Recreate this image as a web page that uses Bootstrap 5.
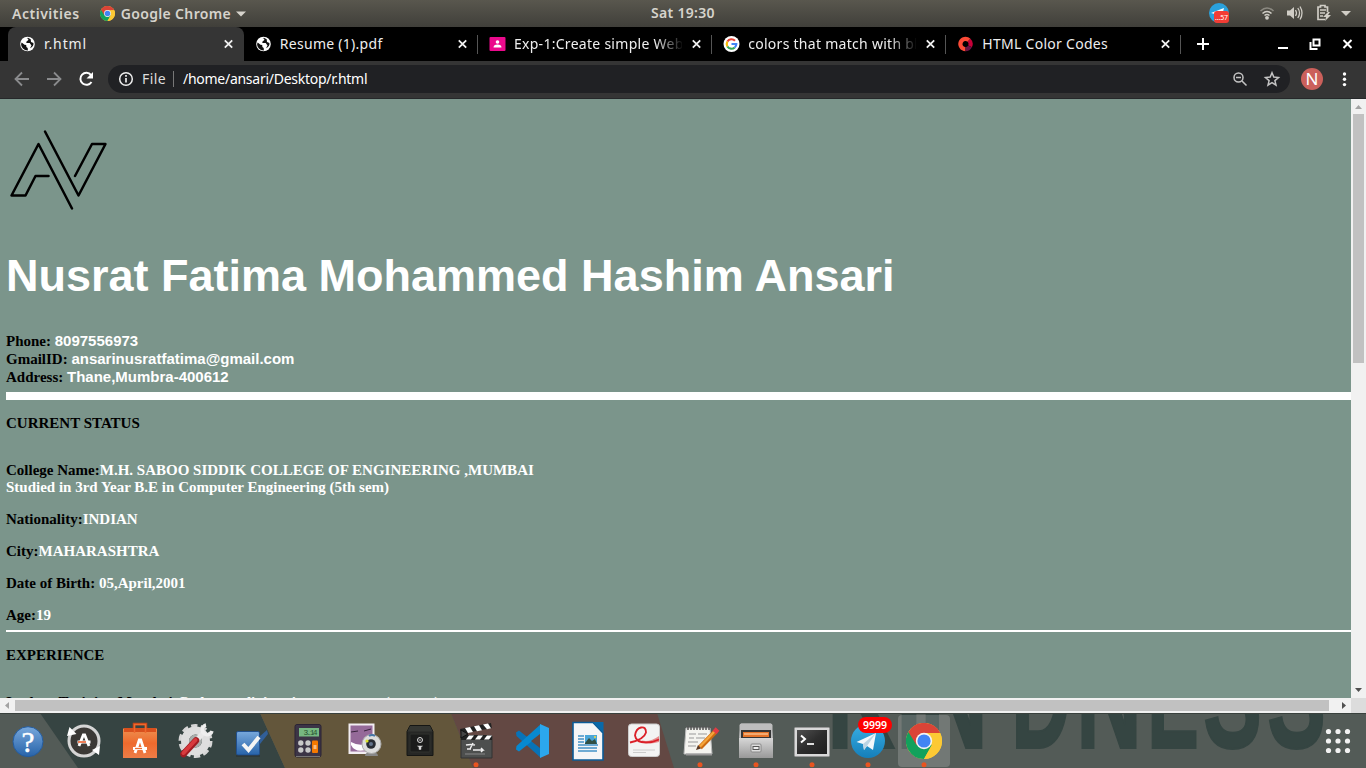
<!DOCTYPE html>
<html lang="en">
<head>
<meta charset="utf-8">
<title>r.html</title>
<link href="https://cdn.jsdelivr.net/npm/bootstrap@5.3.0/dist/css/bootstrap.min.css" rel="stylesheet">
<script src="https://cdn.jsdelivr.net/npm/bootstrap@5.3.0/dist/js/bootstrap.bundle.min.js"></script>
<style>
body{width:1366px;height:768px;overflow:hidden;background:#000;font-family:"Noto Sans",sans-serif;font-size:14px;color:#eee}
svg{display:block;flex:none}
.topbar{height:27px;background:linear-gradient(#59574e,#403f3a);color:#d6d3cc;font-weight:600;font-size:14px;line-height:27px}
.cell{flex:1 1 0}
.activities{margin-left:12px;letter-spacing:.52px}
.app-name{letter-spacing:.35px}
.clock{letter-spacing:.3px;line-height:25px;height:27px}
.tabs{height:34px;background:#000;padding-left:8px}
.tab-item{width:234.2px;height:34px;padding:0 10px 0 11px;position:relative;line-height:34px}
.tab-item.on{background:#353535;border-radius:8px 8px 0 0;width:235.8px}
.tab-item:not(.on)::after{content:"";position:absolute;right:0;top:8px;width:1px;height:19px;background:#555}
.tab-title{width:168px;overflow:hidden;white-space:nowrap;margin-left:8px;letter-spacing:.28px}
.fade-end{-webkit-mask-image:linear-gradient(90deg,#000 84%,transparent 101%)}
.toolbar{height:38px;background:#353535;border-bottom:1px solid #26282a}
.omni{width:1182px;height:28px;border-radius:14px;background:#202124;line-height:26px}
.avatar{width:22px;height:22px;border-radius:50%;background:#cb605b;font-size:17px;line-height:22px;color:#fff}
.view{height:599px}
.page{width:1351px;height:599px;overflow:hidden;background:#7b958b;padding:24px 0 0 6px;color:#000;font:bold 15px/18px "Liberation Serif",serif}
.page h1{font:bold 45px/52px "Liberation Sans",sans-serif;color:#fff;margin:32px 0 30px;white-space:nowrap}
.page p{margin:0 0 15px;line-height:17px;white-space:nowrap}
.page b{color:#fff}
.sans{font-family:"Liberation Sans",sans-serif}
.rule{background:#fff}
.vbar{width:15px;background:#f1f1f1}
.hbar{height:15px;background:#f1f1f1}
.thumb{background:#c1c1c1}
.dock{height:55px;position:relative;overflow:hidden;background:#535b57}
.wall{position:absolute;left:0;top:0}
.launchers{position:relative}
.count{position:absolute;left:858px;top:4px;width:34px;height:16px;border-radius:8px;background:#f00;font-weight:600;font-size:10.5px;line-height:16px;color:#fff}
</style>
</head>
<body>
<svg width="0" height="0" class="position-absolute">
<defs>
<symbol id="x" viewBox="0 0 10 10"><path d="M1.3 1.3l7.4 7.4M8.7 1.3L1.3 8.7" stroke="#f1f1f1" stroke-width="1.8"/></symbol>
<symbol id="globe" viewBox="0 0 16 16"><circle cx="8" cy="8" r="7.3" fill="#fff"/><path d="M2.2 6.5L5 8.7l1.7.3.2 2 1.3 1 .2 2.4C4.500 14.500 1.600 11.500 1.600 8zM6.500 2.500c1.500-.6 2.500.2 2.300 1.500L7 5.500 6.800 7l3.400.1L12 9.500l-1.500 2.700c2.600-1 3.900-3.200 3.400-5.200L11.500 6l-.3-2.800L8.500 1.800z" fill="#111"/></symbol>
<symbol id="chrome" viewBox="-18 -18 36 36"><circle r="18" fill="#fcc934"/><path d="M0 0L-15.600-9A18 18 0 0 0 0 18L8 4z" fill="#12a15c"/><path d="M-15.600-9A18 18 0 0 1 16.200-8H0L-7.500 4z" fill="#db4437"/><path d="M16.200-8A18 18 0 0 1 0 18L7.800 4 7-8z" fill="#fcc934"/><circle r="8.200" fill="#f4f4f4"/><circle r="6.600" fill="#4285f4"/></symbol>
<linearGradient id="blue" x2="0" y2="1"><stop stop-color="#78a8dc"/><stop offset="1" stop-color="#2763a9"/></linearGradient>
<linearGradient id="silver" x2="0" y2="1"><stop stop-color="#d7d7d7"/><stop offset="1" stop-color="#999"/></linearGradient>
<linearGradient id="orange" x2="0" y2="1"><stop stop-color="#ed9050"/><stop offset=".5" stop-color="#ee6a2d"/><stop offset="1" stop-color="#ed7d47"/></linearGradient>
<linearGradient id="tg" x2="0" y2="1"><stop stop-color="#38aee3"/><stop offset="1" stop-color="#157fba"/></linearGradient>
<linearGradient id="dark" x2="1" y2="1"><stop stop-color="#505050"/><stop offset=".5" stop-color="#2d2d2d"/><stop offset="1" stop-color="#1f1f1f"/></linearGradient>
</defs>
</svg>

<div class="topbar d-flex align-items-center">
  <div class="cell d-flex align-items-center">
    <span class="activities">Activities</span>
    <svg width="15" height="15" style="margin:0 6px 0 20px"><use href="#chrome"/></svg>
    <span class="app-name">Google Chrome</span>
    <svg width="10" height="6" style="margin-left:5px"><path d="M0 .5h10l-5 5z" fill="#d6d3cc"/></svg>
  </div>
  <div class="clock">Sat 19:30</div>
  <div class="cell d-flex align-items-center justify-content-end">
    <svg width="160" height="27">
      <circle cx="13" cy="13" r="10" fill="#2aa1dc"/><path d="M5 13l13-5-2 8z" fill="#fff"/><rect x="8" y="11" width="15" height="12" rx="3" fill="#f23c34"/><text x="9" y="20" font-size="7" textLength="13" font-weight="400" fill="#fff">...57</text>
      <g fill="none" stroke="#d0cdc6" stroke-width="1.600"><path d="M54.500 11q6.500-6 13 0" stroke="#8b8981"/><path d="M56.500 13.500q4.500-4 9 0M58.500 15.500q2.500-2 5 0"/></g><circle cx="61" cy="17.800" r="1.900" fill="#d0cdc6"/>
      <path d="M81 10.500h3l4-3.500v12l-4-3.500h-3z" fill="#d0cdc6"/><path d="M89.500 10q2 3 0 6M91.800 8q3.500 5 0 10M94 6.500q4 6.500 0 13" fill="none" stroke="#d0cdc6" stroke-width="1.300"/>
      <path d="M119 19.500h-7V7h2.500V5.500h4.500V7h2.500v5M114 10h6M114 13h5M114 16h3" stroke="#d0cdc6" stroke-width="1.700" fill="none"/><path d="M122 12l-5 5h3l-1 4 6-6h-3l2-3z" fill="#d0cdc6"/>
      <path d="M135 11h10l-5 5z" fill="#d0cdc6"/>
    </svg>
  </div>
</div>

<div class="tabs d-flex">
  <div class="tab-item on d-flex align-items-center"><svg width="17" height="16"><use href="#globe"/></svg><span class="tab-title" style="letter-spacing:.9px">r.html</span><svg class="ms-auto" width="11" height="10"><use href="#x"/></svg></div>
  <div class="tab-item d-flex align-items-center"><svg width="17" height="16"><use href="#globe"/></svg><span class="tab-title">Resume (1).pdf</span><svg class="ms-auto" width="11" height="10"><use href="#x"/></svg></div>
  <div class="tab-item d-flex align-items-center"><svg width="17" height="16" viewBox="0 0 17 16"><rect x=".5" y="1" width="16" height="14" rx="1" fill="#eb0a8c"/><circle cx="8.500" cy="6" r="1.800" fill="#fff"/><path d="M4.500 11.500q0-3 4-3t4 3z" fill="#fff"/></svg><span class="tab-title fade-end">Exp-1:Create simple Web Page</span><svg class="ms-auto" width="11" height="10"><use href="#x"/></svg></div>
  <div class="tab-item d-flex align-items-center"><svg width="17" height="16" viewBox="0 0 17 16"><circle cx="8.500" cy="8" r="8" fill="#fff"/><g fill="none" stroke-width="2.200"><path d="M4.400 5.500A4.800 4.800 0 0 1 12 4.800" stroke="#ea4335"/><path d="M4.400 10.500a5 5 0 0 1 0-5" stroke="#fbbc05"/><path d="M11.700 11.500A4.800 4.800 0 0 1 4.400 10.500" stroke="#34a853"/><path d="M8.500 8h4.800q0 2.200-1.600 3.500" stroke="#4285f4"/></g></svg><span class="tab-title fade-end">colors that match with black</span><svg class="ms-auto" width="11" height="10"><use href="#x"/></svg></div>
  <div class="tab-item d-flex align-items-center"><svg width="17" height="16" viewBox="0 0 17 16"><g fill="none" stroke-width="4.200"><path d="M8.500 13.100A5.100 5.100 0 1 1 12 4.300" stroke="#fc4a36"/><path d="M12 4.300a5.100 5.100 0 0 1 1 6" stroke="#c70039"/><path d="M13 10.300a5 5 0 0 1-4.500 2.800" stroke="#6b1244"/></g></svg><span class="tab-title">HTML Color Codes</span><svg class="ms-auto" width="11" height="10"><use href="#x"/></svg></div>
  <svg width="184" height="34"><g stroke="#fff" stroke-width="2" fill="none"><path d="M16 17h12M22 11v12M97 21h10"/><path d="M132.500 12.500h6v6h-6zM129.500 15v7h7"/><path d="M162.500 13l8 8m0-8l-8 8"/></g></svg>
</div>

<div class="toolbar d-flex align-items-center">
  <svg width="108" height="37"><g fill="none" stroke="#8a8b8d" stroke-width="1.800"><path d="M29 18H16M22 11.500L15.500 18l6.500 6.500M47 18h13M54 11.500l6.500 6.500-6.500 6.500"/><path d="M91.500 21a6 6 0 1 1-.5-7" stroke="#fff" stroke-width="2"/></g><path d="M93 11v6.500h-6.500z" fill="#fff"/></svg>
  <div class="omni d-flex align-items-center" style="margin-bottom:1px">
    <svg width="34" height="28"><circle cx="18" cy="14" r="6.300" fill="none" stroke="#eee" stroke-width="1.500"/><path d="M18 13v4.500M18 10v1.700" stroke="#eee" stroke-width="1.700"/></svg>
    <span style="color:#ddd;letter-spacing:.4px">File</span>
    <span style="width:1px;height:16px;background:#777;margin:0 9px 0 7px"></span>
    <span class="text-white" style="letter-spacing:-.27px">/home/ansari/Desktop/r.html</span>
    <svg class="ms-auto" width="66" height="28"><g fill="none" stroke="#c4c4c4" stroke-width="1.500"><circle cx="14.500" cy="12.500" r="4.500"/><path d="M18 16l4.500 4.500M12 12.500h5"/><path d="M48 7.800l1.800 4.300 4.700.4-3.600 3.100 1.100 4.600-4-2.500-4 2.500 1.100-4.600-3.600-3.100 4.700-.4z"/></g></svg>
  </div>
  <div class="avatar text-center" style="margin:0 0 1px 11px">N</div>
  <svg width="42" height="37"><g fill="#fff"><circle cx="21.500" cy="13" r="1.700"/><circle cx="21.500" cy="18.300" r="1.700"/><circle cx="21.500" cy="23.600" r="1.700"/></g></svg>
</div>

<div class="view d-flex">
  <main class="page">
    <svg width="104" height="95"><g transform="translate(-6,-123)" fill="none" stroke="#000" stroke-width="2.500" stroke-linecap="round" stroke-linejoin="round"><path d="M72 208.500L38.500 144l-27 51.500H25.500L35.500 176H48.500M45 131.500L78.500 195.500 105.500 144H92L75 176"/></g></svg>
    <h1>Nusrat Fatima Mohammed Hashim Ansari</h1>
    <div>Phone: <b class="sans">8097556973</b></div>
    <div>GmailID: <b class="sans">ansarinusratfatima@gmail.com</b></div>
    <div>Address: <b class="sans">Thane,Mumbra-400612</b></div>
    <div class="rule" style="height:8px;margin:6px 0 15px"></div>
    <p style="margin-bottom:30px">CURRENT STATUS</p>
    <p>College Name:<b>M.H. SABOO SIDDIK COLLEGE OF ENGINEERING ,MUMBAI<br>Studied in 3rd Year B.E in Computer Engineering (5th sem)</b></p>
    <p>Nationality:<b>INDIAN</b></p>
    <p>City:<b>MAHARASHTRA</b></p>
    <p>Date of Birth: <b>05,April,2001</b></p>
    <p class="mb-0">Age:<b>19</b></p>
    <div class="rule" style="height:2px;margin:6px 0 15px"></div>
    <p style="margin-bottom:30px">EXPERIENCE</p>
    <p>In-door Training,Mumbai:<b>Codersmedia’s private company(remote)</b></p>
  </main>
  <div class="vbar d-flex flex-column align-items-center">
    <svg width="15" height="15"><path d="M4 10h7L7.500 6z" fill="#a3a3a3"/></svg>
    <div class="thumb" style="width:11px;height:249px"></div>
    <svg class="mt-auto" width="15" height="15"><path d="M4 5h7L7.500 9z" fill="#505050"/></svg>
  </div>
</div>
<div class="hbar d-flex align-items-center">
  <svg width="15" height="15"><path d="M9 4v7L5 7.500z" fill="#a3a3a3"/></svg>
  <div class="thumb" style="width:1314px;height:11px"></div>
  <svg width="22" height="15"><path d="M13 4v7l4-3.500z" fill="#505050"/></svg>
  <div class="ms-auto h-100" style="width:15px;background:#dcdcdc"></div>
</div>

<div class="dock d-flex align-items-center">
  <svg class="wall" width="1366" height="55">
    <path d="M40 0h220l25 55H78z" fill="#364442"/><path d="M260 0h191l22 55H285z" fill="#63563b"/><path d="M451 0h206l17 55H473z" fill="#634843"/>
    <g fill="#354542" stroke="#354542" stroke-width="2" font-family="Liberation Sans" font-weight="700" font-size="150" aria-hidden="true">
      <text x="827" y="35" textLength="68" lengthAdjust="spacingAndGlyphs">K</text><text x="896" y="35" textLength="26" lengthAdjust="spacingAndGlyphs">I</text><text x="920" y="35" textLength="68" lengthAdjust="spacingAndGlyphs">N</text><text x="1011" y="35" textLength="60" lengthAdjust="spacingAndGlyphs">D</text><text x="1076" y="35" textLength="66" lengthAdjust="spacingAndGlyphs">N</text><text x="1147" y="35" textLength="52" lengthAdjust="spacingAndGlyphs">E</text><text x="1203" y="35" textLength="59" lengthAdjust="spacingAndGlyphs">S</text><text x="1267" y="35" textLength="59" lengthAdjust="spacingAndGlyphs">S</text>
    </g>
    <path d="M0 .5h1366" stroke="#39413d"/>
  </svg>
  <div class="launchers d-flex">
    <svg width="56" height="55"><circle cx="28" cy="28.700" r="15" fill="url(#blue)" stroke="#245c9f"/><text x="28" y="38.500" text-anchor="middle" font-family="Liberation Serif" font-size="29" fill="#fff" stroke="#fff" stroke-width=".5">?</text></svg>
    <svg width="56" height="55"><circle cx="28" cy="28" r="15" fill="#3b3936" stroke="#d5d5d5" stroke-width="3"/><path d="M11 23l2.500-9 7 7zM44 33l-1 9-7-5z" fill="#fff"/><path d="M23 33l4.300-11h1.400L33 33" stroke="#fff" stroke-width="2.800" fill="none"/><path d="M21.500 29h13" stroke="#fff" stroke-width="3"/><path d="M22 29h8" stroke="#e95420" stroke-width="1.500"/></svg>
    <svg width="56" height="55"><path d="M22 20v-9h12v9" fill="none" stroke="#c54417" stroke-width="2.500"/><path d="M11 15.500h34V45H11z" fill="url(#orange)"/><path d="M12 15h32v4H12z" fill="#d9501d"/><path d="M22.500 20v-8.500h11V20" fill="none" stroke="#f0682d" stroke-width="1.500"/><path d="M23 40l4.300-13h1.400L33 40" stroke="#fff" stroke-width="2.800" fill="none"/><path d="M21 35.500h14" stroke="#fff" stroke-width="3"/><path d="M23 35.500h7" stroke="#ed6f33" stroke-width="1.300"/></svg>
    <svg width="56" height="55"><circle cx="27.500" cy="28" r="14.500" fill="none" stroke="#d6d6d6" stroke-width="5" stroke-dasharray="6 3.110"/><circle cx="27.500" cy="28" r="10.500" fill="none" stroke="#dedede" stroke-width="8"/><circle cx="27.500" cy="28" r="6.500" fill="#a9adab"/><path d="M28 28l9-10" stroke="#e8e8e8" stroke-width="5"/><path d="M44 18a5 5 0 1 1-6-6" fill="none" stroke="#eee" stroke-width="3.400"/><path d="M15.500 41L28 27.500" stroke="#a01c22" stroke-width="6.500" stroke-linecap="round"/><path d="M15.500 40L27.500 27" stroke="#d83a3e" stroke-width="4" stroke-linecap="round"/></svg>
    <svg width="56" height="55"><path d="M35 24l8-7 1 4-8 10z" fill="#315f98"/><rect x="12.500" y="18.500" width="23" height="23.500" rx="1.500" fill="url(#blue)" stroke="#214f8c"/><path d="M19 31l5.500 6L35 24" fill="none" stroke="#f4f4f4" stroke-width="4"/><path d="M12 43h24" stroke="#222" opacity=".6"/></svg>
    <svg width="56" height="55"><rect x="15" y="11.500" width="26" height="32.500" rx="2" fill="#3c3546" stroke="#2a2334"/><rect x="19" y="15" width="20" height="8.500" fill="#77b881"/><text x="23.500" y="22" font-family="Liberation Mono" font-size="8" textLength="14" fill="#26532f">3.14</text><g fill="#c9c9c9"><circle cx="20.800" cy="30" r="2.700"/><circle cx="28" cy="30" r="2.700"/><circle cx="20.800" cy="37" r="2.700"/><circle cx="28" cy="37" r="2.700"/></g><rect x="32" y="27.500" width="6" height="12.500" rx="1" fill="#f57900"/><path d="M33.500 33h3m-3 2h3" stroke="#fff"/><path d="M16 43.500h24" stroke="#777"/></svg>
    <svg width="56" height="55"><rect x="12.500" y="10.500" width="26" height="30.500" fill="#f2edf2"/><rect x="14.500" y="12.500" width="22" height="26" fill="#956a99"/><path d="M15 19l7-1M28 18l7-2" stroke="#38233d"/><path d="M15 29q7 4 15 2v6q-11 3-15-5z" fill="#fff"/><path d="M29 43q0-4 6.500-4t6.500 4z" fill="#888"/><circle cx="35.500" cy="31" r="9.500" fill="#ddd" stroke="#aaa"/><circle cx="35" cy="31" r="4.800" fill="#282c34"/><circle cx="35" cy="31" r="2" fill="#63738b"/><circle cx="31" cy="28" r="1.600" fill="#dce329"/><path d="M33 23q3-2 6 0" stroke="#4675a7" stroke-width="2" fill="none"/></svg>
    <svg width="56" height="55"><path d="M18 12.500h20l3 6v24H15v-24z" fill="#262725" stroke="#151614"/><path d="M18 13h20l2.500 5.500h-25z" fill="#343632"/><rect x="18" y="21" width="20" height="18" rx="1" fill="#1b1c1b" stroke="#30322f"/><circle cx="28" cy="27" r="2.500" fill="#1b1c1b" stroke="#ddd"/><path d="M26.500 26l3 2m0-2l-3 2M25.500 33h5l-1.500 1v2.500h-2V34z" stroke="#ccc" stroke-width=".5" fill="#ddd"/></svg>
    <svg width="56" height="55"><path d="M13 23h31v22H13z" fill="#4d4f4e" stroke="#333"/><path d="M12 16l31-6 .8 5L13 21z" fill="#222"/><path d="M17 15l5-1 3 5-5 1zM26 13.300l5-1 3 5-5 1zM35 11.500l5-1 3 4.700-4 1z" fill="#fff"/><path d="M13 22h31v5H13z" fill="#222"/><path d="M21 22.500h5l-3 4h-5zM30 22.500h5l-3 4h-5zM39 22.500h5l-3 4h-5z" fill="#fff"/><path d="M13 17v8l7-4z" fill="#444" stroke="#111"/><path d="M18 32q5-1 9 0M19 36h4m2-6l-3 6M25 37h10l-2-2m2 2l-2 2" stroke="#eee" stroke-width="1.500" fill="none"/><path d="M17 41h20" stroke="#888"/><circle cx="28" cy="51.700" r="2.500" fill="#e95420"/></svg>
    <svg width="56" height="55"><path d="M12 19.500l3-2 22 17.500V45L12.500 23z" fill="#0873b8"/><path d="M12 36.500l3 2L37 21V11L12.500 33z" fill="#0789d1"/><path d="M36 11l9 4v26l-9 4z" fill="#2ba7ed"/><path d="M36 21v14l-9-7z" fill="#634843"/></svg>
    <svg width="56" height="55"><path d="M13 9.500h20L43 20v27H13z" fill="#f5f6f7" stroke="#0b5c98" stroke-width="1.600"/><path d="M33 9h10.500v11z" fill="#0869a9"/><g stroke="#4393c8" stroke-width="1.500"><path d="M18 23h6m-6 3h6m-6 3h6m-6 3h20M18 35h19M18 38h19"/></g><rect x="25" y="22" width="12" height="9" fill="#4aa6d8"/><path d="M25 30l4-5 3 3 3-2 2 5H25z" fill="#315044"/><circle cx="35" cy="24" r="1" fill="#f8dd35"/></svg>
    <svg width="56" height="55"><rect x="12.500" y="11" width="31" height="32.500" rx="3" fill="#f3f3f3" stroke="#ccc"/><path d="M26 27.500q8 2 17-4.500v6q-10 3-17-.5z" fill="#e68a8b"/><path d="M14 29.500q14-3 16-10 0-6-5-5t-6 8q1 7 11 7 7 0 13-3" fill="none" stroke="#db2029" stroke-width="1.800"/><path d="M17 37h22M17 39.500h13" stroke="#ccc"/></svg>
    <svg width="56" height="55"><path d="M14 15h24l2 26H12z" fill="#f4f4ef" stroke="#bbb"/><path d="M16 13v4m3-4v4m3-4v4m3-4v4m3-4v4m3-4v4m3-4v4m3-4v4" stroke="#555" stroke-width="1.500"/><path d="M17 21h7m2 0h9M17 25h5m2 0h9M16 29h10M16 33h8" stroke="#999"/><path d="M14 41.500h26" stroke="#999" stroke-width="2"/><path d="M28 34.500L44 18" stroke="#cd6c11" stroke-width="5"/><path d="M28 33.500L43 18" stroke="#f5a63b" stroke-width="2.500"/><path d="M42.500 19.500l3-3.500" stroke="#e23b44" stroke-width="5"/><path d="M26 32l-2 5 5-1.500z" fill="#5b3922"/><circle cx="28" cy="51.700" r="2.500" fill="#e95420"/></svg>
    <svg width="56" height="55"><path d="M13 10.500h30l2 14V44H11V24z" fill="#a9a9a9"/><rect x="11.500" y="10.500" width="33" height="15" rx="2" fill="#bdbdbd"/><rect x="13" y="17" width="30" height="8" fill="#353535"/><path d="M15 19h26v5H15z" fill="#e5742a"/><path d="M16 21h24" stroke="#ffe0b7"/><path d="M11 25h34v20H11z" fill="url(#silver)"/><rect x="23" y="31" width="10" height="8" rx="1" fill="#ddd" stroke="#888"/><rect x="25" y="33.500" width="6" height="3" fill="#eee" stroke="#555"/><circle cx="28" cy="51.700" r="2.500" fill="#e95420"/></svg>
    <svg width="56" height="55"><rect x="10.500" y="14.500" width="35" height="29" rx="1" fill="#d9d9d9" stroke="#999"/><rect x="13" y="17" width="30" height="24" fill="url(#dark)"/><path d="M17 22.500l4 3.500-4 3.500" fill="none" stroke="#fff" stroke-width="2"/><path d="M23 31h7" stroke="#fff" stroke-width="1.700"/><circle cx="28" cy="51.700" r="2.500" fill="#e95420"/></svg>
    <svg width="56" height="55"><circle cx="28" cy="28" r="17" fill="url(#tg)"/><path d="M16.500 29L36 20l-3 17-6-4-3 4-1-6z" fill="#f3f7fa"/><path d="M23 31l13-11-9 13-3 4z" fill="#bcd4e3"/><circle cx="28" cy="51.700" r="2.500" fill="#e95420"/></svg>
    <svg width="56" height="55"><rect x="2" y="2" width="52" height="52" rx="4" fill="#fff" opacity=".18"/><use href="#chrome" x="10" y="10" width="36" height="36"/><circle cx="28" cy="51.700" r="2.500" fill="#e95420"/></svg>
  </div>
  <span class="count text-center">9999</span>
  <svg class="ms-auto position-relative" width="56" height="55"><g fill="#f2f2f2"><circle cx="18.500" cy="18.500" r="2.600"/><circle cx="28" cy="18.500" r="2.600"/><circle cx="37.500" cy="18.500" r="2.600"/><circle cx="18.500" cy="28" r="2.600"/><circle cx="28" cy="28" r="2.600"/><circle cx="37.500" cy="28" r="2.600"/><circle cx="18.500" cy="37.500" r="2.600"/><circle cx="28" cy="37.500" r="2.600"/><circle cx="37.500" cy="37.500" r="2.600"/></g></svg>
</div>
</body>
</html>
